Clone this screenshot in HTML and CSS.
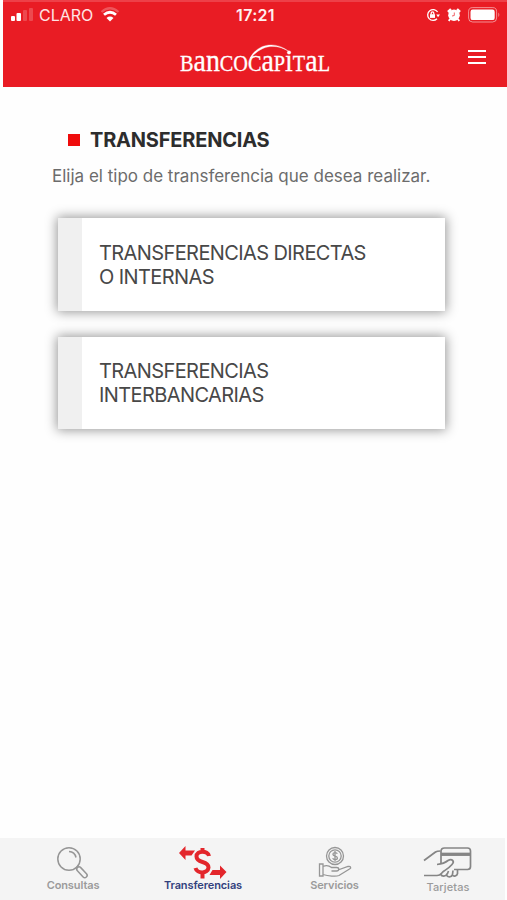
FILE: index.html
```
<!DOCTYPE html>
<html lang="es">
<head>
    <meta charset="UTF-8">
    <meta name="viewport" content="width=device-width, initial-scale=1.0">
    <title>Transferencias</title>
    <link rel="stylesheet" href="styles.css">
</head>
<body>

    <header class="header">
        <!-- Status bar -->
        <div class="status-bar">
            <div class="carrier">
                <svg class="signal" width="24" height="14" viewBox="0 0 24 14" fill="#fff">
                    <rect x="0" y="8" width="4" height="5" rx="1"/>
                    <rect x="5.500" y="5" width="4.500" height="8" rx="1"/>
                    <rect x="12" y="2" width="4" height="11" rx="1" opacity=".2"/>
                    <rect x="18" y="0" width="4" height="13" rx="1" opacity=".2"/>
                </svg>
                <span>CLARO</span>
                <svg class="wifi" width="20" height="15" viewBox="0 0 20 15" fill="none" stroke="#fff">
                    <path d="M1.500 5Q10-2.500 18.500 5" stroke-width="2.200" opacity=".25"/>
                    <path d="M4 7.800Q10 2.700 16 7.800" stroke-width="2.800"/>
                    <path d="M10 14.500L6.500 11Q10 8.200 13.500 11Z" fill="#fff" stroke="none"/>
                </svg>
            </div>
            <span class="clock">17:21</span>
            <div class="status-icons">
                <svg width="14" height="14" viewBox="0 0 14 14" fill="none" stroke="#fff" stroke-width="1.300">
                    <path d="M11.600 4A5.400 5.400 0 1 0 11 10.700"/>
                    <path d="M10.300 6.500h3.700L12 9.300Z" fill="#fff" stroke="none"/>
                    <rect x="4" y="6.200" width="5" height="3.700" fill="#fff" stroke="none"/>
                    <path d="M5.200 6.500V5.200a1.300 1.300 0 0 1 2.600 0v1.300"/>
                </svg>
                <svg width="14" height="14" viewBox="0 0 14 14" fill="none" stroke="#fff">
                    <circle cx="7" cy="7.200" r="5.800" fill="#fff" stroke="none"/>
                    <path d="M1 4L4 1.200M13 4L10 1.200" stroke-width="2.500"/>
                    <path d="M3 11L1.800 13M11 11L12.200 13" stroke-width="1.800"/>
                    <path d="M7.300 4.500v3L5 8" stroke="#e91c24" stroke-width=".7"/>
                </svg>
                <svg width="32" height="16" viewBox="0 0 32 16">
                    <rect x=".6" y=".6" width="28" height="14.400" rx="4" fill="none" stroke="#fff" stroke-width="1" opacity=".5"/>
                    <rect x="2.500" y="2.500" width="24.200" height="10.600" rx="2.200" fill="#fff"/>
                    <path d="M30.300 5.500q2 2.200 0 4.500z" fill="#fff" opacity=".5"/>
                </svg>
            </div>
        </div>
        <div class="nav-bar">
            <svg class="logo" width="152" height="34" viewBox="0 0 152 34" fill="#fff">
                <text x="1" y="28.500" textLength="150" lengthAdjust="spacingAndGlyphs" font-size="22.500">B<tspan font-size="31">an</tspan>COC<tspan font-size="31">a</tspan>P<tspan font-size="31">ı</tspan>T<tspan font-size="31">a</tspan>L</text>
                <path d="M71 16C79 1 97-1 110 9.500C97 1.500 83 2.500 72 16Z"/>
                <circle cx="110" cy="10.500" r="1.800"/>
            </svg>
            <button class="menu-btn" aria-label="Menú">
                <span></span>
                <span></span>
                <span></span>
            </button>
        </div>
    </header>

    <main>
        <h1>TRANSFERENCIAS</h1>
        <p class="intro">Elija el tipo de transferencia que desea realizar.</p>
        <ul class="transfer-list">
            <li class="transfer">TRANSFERENCIAS DIRECTAS<br>O INTERNAS</li>
            <li class="transfer">TRANSFERENCIAS<br>INTERBANCARIAS</li>
        </ul>
    </main>

    <!-- Bottom tabs -->
    <nav class="tabs">
        <a class="tab tab-consultas">
            <svg width="34" height="34" viewBox="0 0 34 34" fill="none" stroke="#969696" stroke-width="1.500">
                <circle cx="13" cy="13" r="11.200"/>
                <path d="M13 5.500a7.500 7.500 0 0 1 7 6M20.500 21.500l2-2"/>
                <rect x="-2.300" y="0" width="4.600" height="13" rx="2.300" transform="translate(21.500 21.500) rotate(-43)"/>
            </svg>
            <span>Consultas</span>
        </a>
        <a class="tab tab-transferencias active">
            <svg width="48" height="34" viewBox="0 0 48 34" fill="#e3262b">
                <path d="M0 7L6.500 0v4.500H16l-3.500 5H6.500V14ZM47.500 26L41 19.500V24h-7.500L30.500 29H41v4Z"/>
                <path d="M30 10C29 4.500 17.500 4 17.500 10.500C17.500 18 29.500 14 29.500 21.500C29 28 18 28 16.500 22M23.500 2v4M23.500 26.500v6" fill="none" stroke="#e3262b" stroke-width="4"/>
            </svg>
            <span>Transferencias</span>
        </a>
        <a class="tab tab-servicios">
            <svg width="34" height="34" viewBox="0 0 34 34" fill="none" stroke="#969696" stroke-width="1.300">
                <circle cx="17" cy="10" r="8.500"/>
                <circle cx="17" cy="10" r="6.200"/>
                <path d="M19.300 7.800c-.7-1.800-4.400-1.700-4.400.4 0 2.200 4.500 1.500 4.500 3.700 0 2.100-4 2.200-4.700.2M17 5v10"/>
                <path d="M1.500 18h3.500v12h-3.500zM5 20.500c4-2 6-1 8.500 1h5c3 0 3 3.500 0 3.500h-5M20 24l10-3.500c3-.5 3.500 1.500 1.500 2.500L21 29.500c-3 1.400-11 .5-16-1"/>
            </svg>
            <span>Servicios</span>
        </a>
        <a class="tab tab-tarjetas">
            <svg width="50" height="34" viewBox="0 0 50 34" fill="none" stroke="#858585" stroke-width="1.700" stroke-linejoin="round">
                <path d="M18 17V5.500q0-3.500 3.500-3.500h23q3 0 3 3v15.500q0 3-3 3H31"/>
                <path d="M18 8.300h29.500" stroke-width="3.300"/>
                <path d="M1 14.500L12.500 6q1.500-1 5-1M14 18.500c4-.5 8-1.500 11-4c4-2.500 7 1 4 4c-3 3.500-5 4.500-8 6.500c-3 2-3 4.500-7 4.500H1M17.500 28c1.500 3 5 3 7-.5l1-2.500M23.500 29c1 2.500 5 2.500 6-.5l.5-4M29 29c2 2 5 1 5.500-1.500V24"/>
            </svg>
            <span>Tarjetas</span>
        </a>
    </nav>

</body>
</html>
```
FILE: styles.css
```
* {
    box-sizing: border-box;
}
body {
    display: flex;
    flex-direction: column;
    height: 900px;
    margin: 0;
    font-family: Inter, 'Liberation Sans', sans-serif;
    background: #fefefe;
    overflow: hidden;
}
.header {
    height: 87px;
    margin-left: 3px;
    background: #e91c24;
    border-top: 2px solid #ee4048;
    color: #fff;
}
.status-bar {
    display: grid;
    grid-template-columns: 1fr auto 1fr;
    align-items: center;
    height: 25px;
    padding: 0 7px 0 8px;
}
.carrier {
    display: flex;
    align-items: center;
    font-size: 16px;
    color: #ffe4e4;
}
.signal {
    margin-right: 4px;
}
.wifi {
    margin-left: 7px;
}
.clock {
    font-size: 16px;
    font-weight: 600;
    letter-spacing: 0.3px;
    color: #fff0f0;
}
.status-icons {
    display: flex;
    align-items: center;
    justify-content: flex-end;
    gap: 7px;
}
.nav-bar {
    display: flex;
    align-items: flex-start;
    justify-content: space-between;
    padding: 15px 21px 0 176px;
}
.logo {
    font-family: 'Liberation Serif', serif;
    stroke: #fff;
    stroke-width: 0.3px;
}
.menu-btn {
    display: flex;
    flex-direction: column;
    gap: 4px;
    margin-top: 8px;
    padding: 0;
    border: none;
    background: none;
}
.menu-btn span {
    width: 18px;
    height: 2px;
    background: #fff;
}
main {
    flex: 1;
    padding: 41px 62px 0 52px;
}
h1 {
    display: flex;
    align-items: center;
    margin: 0 0 0 16px;
    font-size: 20px;
    line-height: 24px;
    font-weight: 700;
    letter-spacing: -0.2px;
    color: #2d2d2d;
}
h1::before {
    content: "";
    width: 12px;
    height: 12px;
    margin-right: 10px;
    background: #ef0c0c;
}
.intro {
    margin: 13px 0 0;
    font-size: 17px;
    line-height: 22px;
    white-space: nowrap;
    color: #6c6c6c;
}
.transfer-list {
    display: grid;
    gap: 26px;
    margin: 31px 0 0 6px;
    padding: 0;
    list-style: none;
}
.transfer {
    height: 92.5px;
    padding: 22.5px 0 0 17px;
    border-left: 24px solid #f0f0f0;
    background: #fff;
    box-shadow: 0 0 11px 1px rgba(0, 0, 0, 0.42);
    font-size: 20px;
    line-height: 24px;
    letter-spacing: -0.6px;
    color: #484848;
}
.tabs {
    display: flex;
    height: 62px;
    margin-right: 2px;
    background: #f4f4f4;
}
.tab {
    display: flex;
    flex-direction: column;
    align-items: center;
    padding-top: 8px;
    font-size: 11px;
    line-height: 12px;
    font-weight: 600;
    color: #9b9b9b;
}
.tab span {
    margin-top: -1px;
    letter-spacing: -0.1px;
    white-space: nowrap;
}
.tab-consultas {
    width: 146px;
}
.tab-transferencias {
    width: 114px;
}
.tab-servicios {
    width: 149px;
}
.tab-tarjetas {
    width: 78px;
    font-weight: 500;
}
.tab-tarjetas span {
    margin-top: 1px;
    letter-spacing: 0.1px;
}
.tab.active {
    color: #32417d;
}
```
